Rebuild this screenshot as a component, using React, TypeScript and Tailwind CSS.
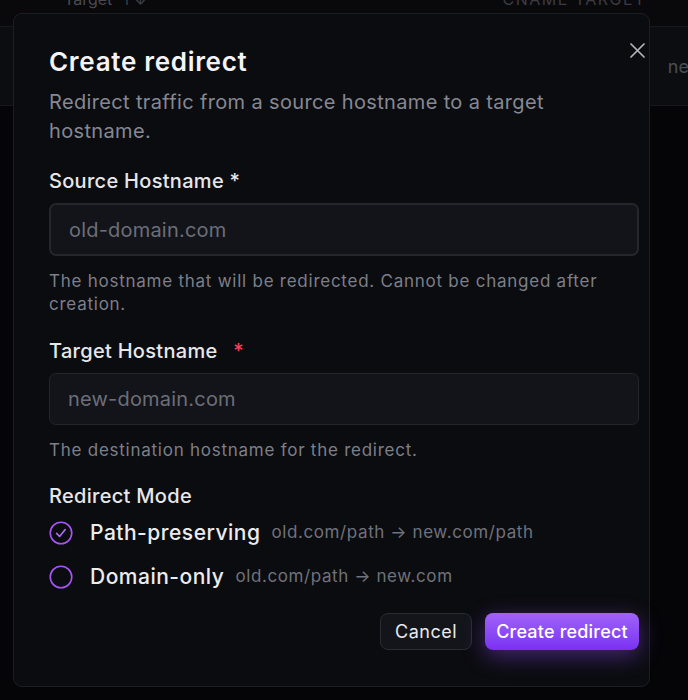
import React from 'react'

const font = { fontFamily: 'Inter, "Noto Sans", sans-serif' }

function RadioMark({ checked }: { checked: boolean }) {
  return (
    <svg width="24" height="24" viewBox="0 0 24 24" className="shrink-0">
      <circle cx="12" cy="12" r="10.75" fill="none" stroke="#a855f7" strokeWidth="1.6" />
      {checked && (
        <path d="M7.6 12.4l3 3.1 5.6-7" fill="none" stroke="#b06cf9" strokeWidth="1.6" strokeLinecap="round" strokeLinejoin="round" />
      )}
    </svg>
  )
}

function ModeOption({ label, example, checked }: { label: string; example: string; checked: boolean }) {
  return (
    <label className="flex items-center h-[30px] cursor-pointer">
      <RadioMark checked={checked} />
      <span className="ml-[17px] text-[21px] font-medium text-[#ececef] tracking-[0.5px]">{label}</span>
      <span className="ml-[11px] text-[17px] text-[#70727c] tracking-[0.6px]">{example}</span>
    </label>
  )
}

export default function App() {
  return (
    <div className="relative w-[688px] h-[700px] overflow-hidden bg-[#050507]" style={font}>
      {/* table behind the dialog */}
      <div className="flex items-start justify-between h-[27px] bg-[#09090c] border-b border-[#17181c]">
        <span className="ml-[64px] -mt-[11px] flex items-center gap-2 text-[16px] leading-[20px] text-[#4a4b52]">
          Target <span className="text-[#3e3f45]">↑↓</span>
        </span>
        <span className="mr-[42px] -mt-[11px] text-[16px] leading-[20px] uppercase tracking-[1.5px] text-[#3b3c42]">CNAME Target</span>
      </div>
      <div className="flex items-center justify-end h-[79px] bg-[#0c0d10] border-b border-[#17181c]">
        <span className="-mr-[1px] text-[18px] text-[#4c4d54]">ne</span>
      </div>

      {/* dialog */}
      <div className="absolute left-[13px] top-[13px] w-[637px] h-[674px] rounded-[9px] border border-[#1d1e24] bg-[#0b0c0f] pl-[35px] pr-[10px] pt-[32px] pb-[36px]">
        <button className="absolute right-[4px] top-[29px] flex items-center justify-center w-[15px] h-[15px] text-[#b4b5bc]">
          <svg width="15" height="15" viewBox="0 0 15 15">
            <path d="M1 1l13 13M14 1L1 14" stroke="currentColor" strokeWidth="1.7" strokeLinecap="round" />
          </svg>
        </button>

        <h2 className="text-[26px] leading-[32px] font-semibold text-[#f4f4f6] tracking-[0.7px]">Create redirect</h2>
        <p className="mt-[10px] pr-[80px] text-[20px] leading-[29px] text-[#868894] tracking-[0.35px]">
          Redirect traffic from a source hostname to a target hostname.
        </p>

        <div className="mt-[21px] w-[590px]">
          <label className="block text-[20px] leading-[28px] font-medium text-[#e7e7ea] tracking-[0.3px]">Source Hostname *</label>
          <div className="mt-[8px] h-[53px] rounded-[7px] border-2 border-[#24262c] bg-[#12141a] flex items-center px-[18px]">
            <span className="text-[20px] text-[#6c6e78] tracking-[0.2px]">old-domain.com</span>
          </div>
          <p className="mt-[14px] text-[17px] leading-[23px] text-[#7d7f89] tracking-[0.75px]">
            The hostname that will be redirected. Cannot be changed after creation.
          </p>

          <label className="mt-[21px] block text-[20px] leading-[28px] font-medium text-[#e7e7ea] tracking-[0.3px]">
            Target Hostname <span className="ml-[10px] text-[#f43f5e]">*</span>
          </label>
          <div className="mt-[8px] h-[52px] rounded-[7px] border border-[#23252b] bg-[#12141a] flex items-center px-[18px]">
            <span className="text-[20px] text-[#6c6e78] tracking-[0.2px]">new-domain.com</span>
          </div>
          <p className="mt-[14px] text-[17px] leading-[23px] text-[#7d7f89] tracking-[0.75px]">
            The destination hostname for the redirect.
          </p>

          <p className="mt-[20px] text-[20px] leading-[28px] font-medium text-[#e7e7ea] tracking-[0.3px]">Redirect Mode</p>
          <div className="mt-[8px] flex flex-col gap-[14px]">
            <ModeOption label="Path-preserving" example="old.com/path → new.com/path" checked />
            <ModeOption label="Domain-only" example="old.com/path → new.com" checked={false} />
          </div>

          <div className="mt-[21px] flex justify-end gap-[13px]">
            <button className="h-[37px] w-[92px] rounded-[8px] border border-[#2a2c33] bg-[#13151b] text-[18px] text-[#e9e9ec] tracking-[0.5px]">
              Cancel
            </button>
            <button className="h-[37px] w-[154px] rounded-[8px] bg-gradient-to-b from-[#a062f8] to-[#7b2ff2] text-[18px] font-medium text-white tracking-[0.2px] shadow-[0_6px_22px_rgba(139,70,246,0.45)]">
              Create redirect
            </button>
          </div>
        </div>
      </div>
    </div>
  )
}
